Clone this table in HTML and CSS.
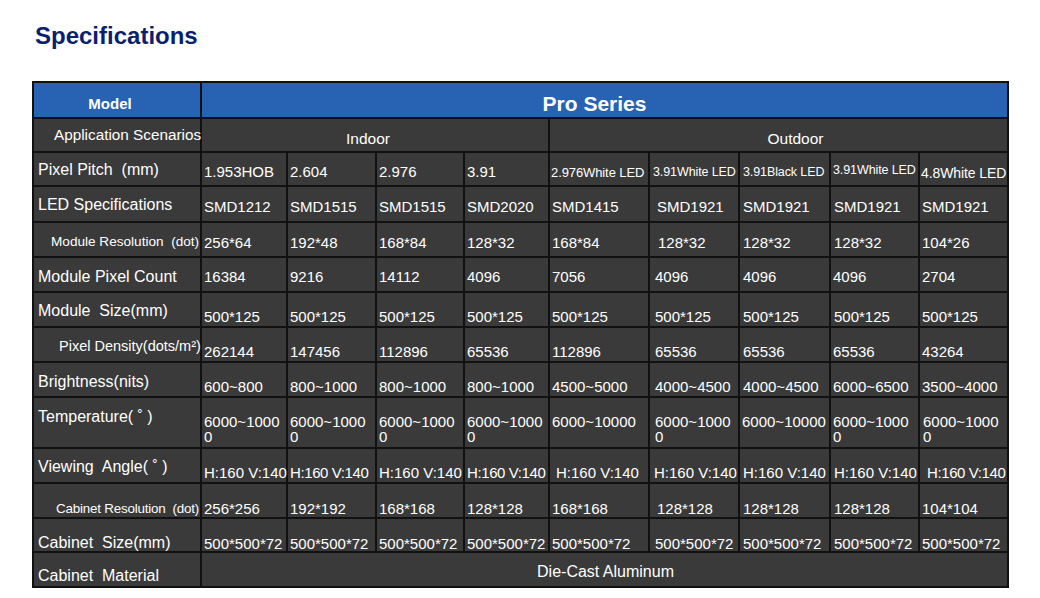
FILE: index.html
```html
<!DOCTYPE html>
<html lang="en">
<head>
<meta charset="utf-8">
<title>Specifications</title>
<link rel="stylesheet" href="styles.css">
</head>
<body>
<h1 class="title">Specifications</h1>
<table class="spec">
  <colgroup>
    <col class="c0"><col class="c1"><col class="c2"><col class="c3"><col class="c4">
    <col class="c5"><col class="c6"><col class="c7"><col class="c8"><col class="c9">
  </colgroup>
  <tr class="r-model">
    <th class="model">Model</th>
    <th class="series" colspan="9">Pro Series</th>
  </tr>
  <tr class="r-app">
    <td class="lbl app">Application Scenarios</td>
    <td class="indoor" colspan="4">Indoor</td>
    <td class="outdoor" colspan="5">Outdoor</td>
  </tr>
  <tr class="r-pitch">
    <td class="lbl">Pixel Pitch&nbsp; (mm)</td>
    <td>1.953HOB</td><td>2.604</td><td>2.976</td><td>3.91</td>
    <td class="led l13 p1">2.976White LED</td>
    <td class="led l125 p3">3.91White LED</td>
    <td class="led l125 p3">3.91Black LED</td>
    <td class="led l125 up p2">3.91White LED</td>
    <td class="led l14 down p1">4.8White LED</td>
  </tr>
  <tr class="r-led">
    <td class="lbl">LED Specifications</td>
    <td>SMD1212</td><td>SMD1515</td><td>SMD1515</td><td>SMD2020</td><td>SMD1415</td>
    <td class="p7">SMD1921</td><td class="p3">SMD1921</td><td class="p3">SMD1921</td><td>SMD1921</td>
  </tr>
  <tr class="r-modres">
    <td class="lbl small">Module Resolution&nbsp; (dot)</td>
    <td>256*64</td><td>192*48</td><td>168*84</td><td>128*32</td><td>168*84</td>
    <td class="p8">128*32</td><td class="p3">128*32</td><td class="p3">128*32</td><td>104*26</td>
  </tr>
  <tr class="r-count">
    <td class="lbl">Module Pixel Count</td>
    <td>16384</td><td>9216</td><td>14112</td><td>4096</td><td>7056</td>
    <td class="p5">4096</td><td class="p3">4096</td><td class="p2">4096</td><td>2704</td>
  </tr>
  <tr class="r-size">
    <td class="lbl">Module&nbsp; Size(mm)</td>
    <td>500*125</td><td>500*125</td><td>500*125</td><td>500*125</td><td>500*125</td>
    <td class="p5">500*125</td><td class="p3">500*125</td><td class="p3">500*125</td><td>500*125</td>
  </tr>
  <tr class="r-density">
    <td class="lbl density">Pixel Density(dots/m²)</td>
    <td>262144</td><td>147456</td><td>112896</td><td>65536</td><td>112896</td>
    <td class="p5">65536</td><td class="p3">65536</td><td class="p2">65536</td><td>43264</td>
  </tr>
  <tr class="r-bright">
    <td class="lbl">Brightness(nits)</td>
    <td>600~800</td><td>800~1000</td><td>800~1000</td><td>800~1000</td><td>4500~5000</td>
    <td class="p5">4000~4500</td><td class="p3">4000~4500</td><td class="p2">6000~6500</td><td>3500~4000</td>
  </tr>
  <tr class="r-temp">
    <td class="lbl">Temperature( ˚ )</td>
    <td>6000~1000<br>0</td><td>6000~1000<br>0</td><td>6000~1000<br>0</td><td>6000~1000<br>0</td>
    <td>6000~10000</td>
    <td class="p5">6000~1000<br>0</td><td class="p2">6000~10000</td><td class="p2">6000~1000<br>0</td><td class="p3">6000~1000<br>0</td>
  </tr>
  <tr class="r-view">
    <td class="lbl">Viewing&nbsp; Angle( ˚ )</td>
    <td>H:160 V:140</td><td class="tight">H:160 V:140</td><td>H:160 V:140</td><td class="tight">H:160 V:140</td>
    <td class="p6">H:160 V:140</td><td class="p4">H:160 V:140</td><td class="p3">H:160 V:140</td><td class="p3">H:160 V:140</td>
    <td class="p7 tight">H:160 V:140</td>
  </tr>
  <tr class="r-cabres">
    <td class="lbl cabres">Cabinet Resolution&nbsp; (dot)</td>
    <td>256*256</td><td>192*192</td><td>168*168</td><td>128*128</td><td>168*168</td>
    <td class="p7">128*128</td><td class="p3">128*128</td><td class="p3">128*128</td><td>104*104</td>
  </tr>
  <tr class="r-cabsize">
    <td class="lbl">Cabinet&nbsp; Size(mm)</td>
    <td>500*500*72</td><td>500*500*72</td><td>500*500*72</td><td>500*500*72</td><td>500*500*72</td>
    <td class="p5">500*500*72</td><td class="p3">500*500*72</td><td class="p3">500*500*72</td><td>500*500*72</td>
  </tr>
  <tr class="r-mat">
    <td class="lbl">Cabinet&nbsp; Material</td>
    <td class="material" colspan="9">Die-Cast Aluminum</td>
  </tr>
</table>
</body>
</html>
```

FILE: styles.css
```css
html, body {
  margin: 0;
  padding: 0;
  background: #ffffff;
}

body {
  font-family: "Liberation Sans", Arial, sans-serif;
}

.title {
  margin: 0;
  padding: 22px 0 0 35px;
  font-size: 24px;
  line-height: 28px;
  font-weight: bold;
  color: #0b1f6d;
}

.spec {
  margin: 31px 0 0 32px;
  border-collapse: collapse;
  table-layout: fixed;
  width: 975px;
  color: #ffffff;
  font-size: 15px;
  line-height: 17px;
}

.c0 { width: 168px; }
.c1 { width: 86px; }
.c2 { width: 89px; }
.c3 { width: 88px; }
.c4 { width: 85px; }
.c5 { width: 100px; }
.c6 { width: 90px; }
.c7 { width: 91px; }
.c8 { width: 89px; }
.c9 { width: 89px; }

.spec th,
.spec td {
  border: 2px solid #111111;
  background: #3a3a3a;
  padding: 0 0 0 2px;
  vertical-align: top;
  text-align: left;
  white-space: nowrap;
  font-weight: normal;
  box-sizing: border-box;
}

.spec th {
  background: #2862b2;
}

/* header row */
.r-model { height: 36px; }
.model {
  text-align: center !important;
  font-weight: bold !important;
  font-size: 15px;
  padding: 12px 14px 0 0 !important;
}
.series {
  text-align: center !important;
  font-size: 21px;
  line-height: 24px;
  font-weight: bold !important;
  padding: 9px 20px 0 0 !important;
}

/* labels */
.lbl {
  font-size: 16px;
  line-height: 18px;
  padding-left: 4px !important;
}
.app { font-size: 15.3px; line-height: 17px; padding-left: 20px !important; }
.small { font-size: 13.6px; line-height: 16px; padding-left: 17px !important; }
.density { font-size: 14.5px; line-height: 17px; padding-left: 25px !important; }
.cabres { font-size: 13.4px; line-height: 15px; padding-left: 22px !important; letter-spacing: -0.2px; }

/* application row */
.r-app { height: 34px; }
.r-app td { padding-top: 11px; }
.r-app td.app { padding-top: 7px; }
.indoor { text-align: center !important; font-size: 15.5px; padding-right: 16px !important; }
.outdoor { text-align: center !important; font-size: 15.5px; padding-left: 34px !important; }

/* pixel pitch */
.r-pitch { height: 34px; }
.r-pitch td { padding-top: 10px; }
.r-pitch td.lbl { padding-top: 8px; }
.led { letter-spacing: -0.1px; }
.l13 { font-size: 13px; }
.l125 { font-size: 12.5px; }
.l14 { font-size: 14px; }
.r-pitch td.led { padding-top: 11px; }
.r-pitch td.up { padding-top: 9px; }
.r-pitch td.down { padding-top: 12px; }

.r-led { height: 36px; }
.r-led td { padding-top: 11px; }
.r-led td.lbl { padding-top: 9px; }

.r-modres { height: 35px; }
.r-modres td { padding-top: 11px; }
.r-modres td.lbl { padding-top: 11px; }

.r-count { height: 35px; }
.r-count td { padding-top: 10px; }
.r-count td.lbl { padding-top: 10px; }

.r-size { height: 35px; }
.r-size td { padding-top: 15px; }
.r-size td.lbl { padding-top: 9px; }

.r-density { height: 35px; }
.r-density td { padding-top: 15px; }
.r-density td.lbl { padding-top: 10px; }

.r-bright { height: 35px; }
.r-bright td { padding-top: 15px; }
.r-bright td.lbl { padding-top: 10px; }

.r-temp { height: 51px; }
.r-temp td { padding-top: 16px; line-height: 15px; }
.r-temp td.lbl { padding-top: 10px; line-height: 18px; }

.r-view { height: 35px; }
.r-view td { padding-top: 16px; line-height: 16px; }
.r-view td.lbl { padding-top: 9px; line-height: 18px; }
.tight { letter-spacing: -0.4px; }

.r-cabres { height: 35px; }
.r-cabres td { padding-top: 17px; line-height: 15px; }
.r-cabres td.lbl { padding-top: 17px; }

.r-cabsize { height: 34px; }
.r-cabsize td { padding-top: 17px; line-height: 15px; }
.r-cabsize td.lbl { padding-top: 16px; line-height: 16px; }

.r-mat { height: 35px; }
.r-mat td { padding-top: 14px; }
.material {
  text-align: center !important;
  font-size: 16px;
  line-height: 18px;
  padding-top: 10px !important;
}

/* per-cell indents */
.p1 { padding-left: 1px !important; }
.p2 { padding-left: 2px !important; }
.p3 { padding-left: 3px !important; }
.p4 { padding-left: 4px !important; }
.p5 { padding-left: 5px !important; }
.p6 { padding-left: 6px !important; }
.p7 { padding-left: 7px !important; }
.p8 { padding-left: 8px !important; }
```
